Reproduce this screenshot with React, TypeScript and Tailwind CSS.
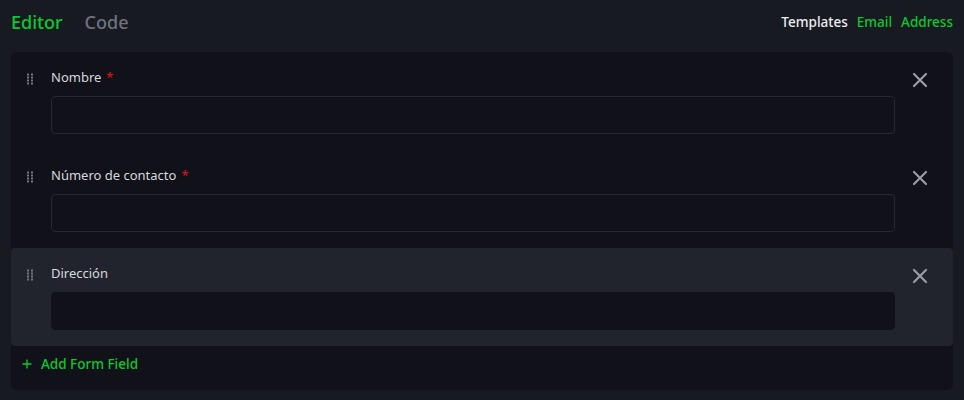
import React from "react";

const Handle = () => (
  <svg width="6" height="12" viewBox="0 0 6 12" className="block">
    {[0, 1, 2, 3].map((r) =>
      [0, 1].map((c) => (
        <rect key={`${r}-${c}`} x={c * 4} y={r * 3 + 0.5} width="2" height="2" fill="#74777f" />
      ))
    )}
  </svg>
);

const XIcon = () => (
  <svg width="16" height="16" viewBox="0 0 16 16" className="block">
    <path d="M2 2 L14 14 M14 2 L2 14" stroke="#9a9ca6" strokeWidth="2.2" strokeLinecap="round" />
  </svg>
);

const Row = ({ label, required, hover }: { label: string; required?: boolean; hover?: boolean }) => (
  <div className={`flex h-[98px] items-start rounded-[4px] ${hover ? "bg-[#22242d]" : ""}`}>
    <div className="w-[40px] shrink-0 pt-[21px] pl-[16px]">
      <Handle />
    </div>
    <div className="flex-1 pt-[15px]">
      <div className="h-5 text-[13px] leading-5 text-[#d6d8de]">
        {label}
        {required && <span className="ml-[5px] text-[#e0161b]">*</span>}
      </div>
      <div
        className={`mt-[9px] h-[38px] rounded-[4px] border bg-[#101119] ${
          hover ? "border-[#101119]" : "border-[#262832]"
        }`}
      />
    </div>
    <div className="w-[58px] shrink-0 pl-[17px] pt-[20px]">
      <XIcon />
    </div>
  </div>
);

export default function App() {
  return (
    <div
      className="w-[964px] h-[400px] bg-[#181a22] px-[11px]"
      style={{ fontFamily: "'Noto Sans', 'Open Sans', sans-serif" }}
    >
      <div className="flex h-[52px] items-center justify-between pb-[8px]">
        <div className="flex items-center gap-[22px] text-[18px] font-medium leading-6">
          <span className="text-[#0ac92e]">Editor</span>
          <span className="text-[#6f7280]">Code</span>
        </div>
        <div className="flex items-center gap-[9px] text-[13.5px] font-medium leading-5 pb-[1px]">
          <span className="text-[#eceef2]">Templates</span>
          <span className="text-[#0ac92e]">Email</span>
          <span className="text-[#0ac92e]">Address</span>
        </div>
      </div>
      <div className="rounded-[6px] bg-[#101119]">
        <Row label="Nombre" required />
        <Row label="Número de contacto" required />
        <Row label="Dirección" hover />
        <div className="flex h-[44px] items-start gap-[9px] pl-[11px] pt-[8px] text-[13.5px] font-medium leading-5 text-[#0ac92e]">
          <svg width="10" height="10" viewBox="0 0 10 10" className="mt-[5px]">
            <path d="M5 0.5 V9.5 M0.5 5 H9.5" stroke="#0ac92e" strokeWidth="1.4" />
          </svg>
          <span>Add Form Field</span>
        </div>
      </div>
    </div>
  );
}
